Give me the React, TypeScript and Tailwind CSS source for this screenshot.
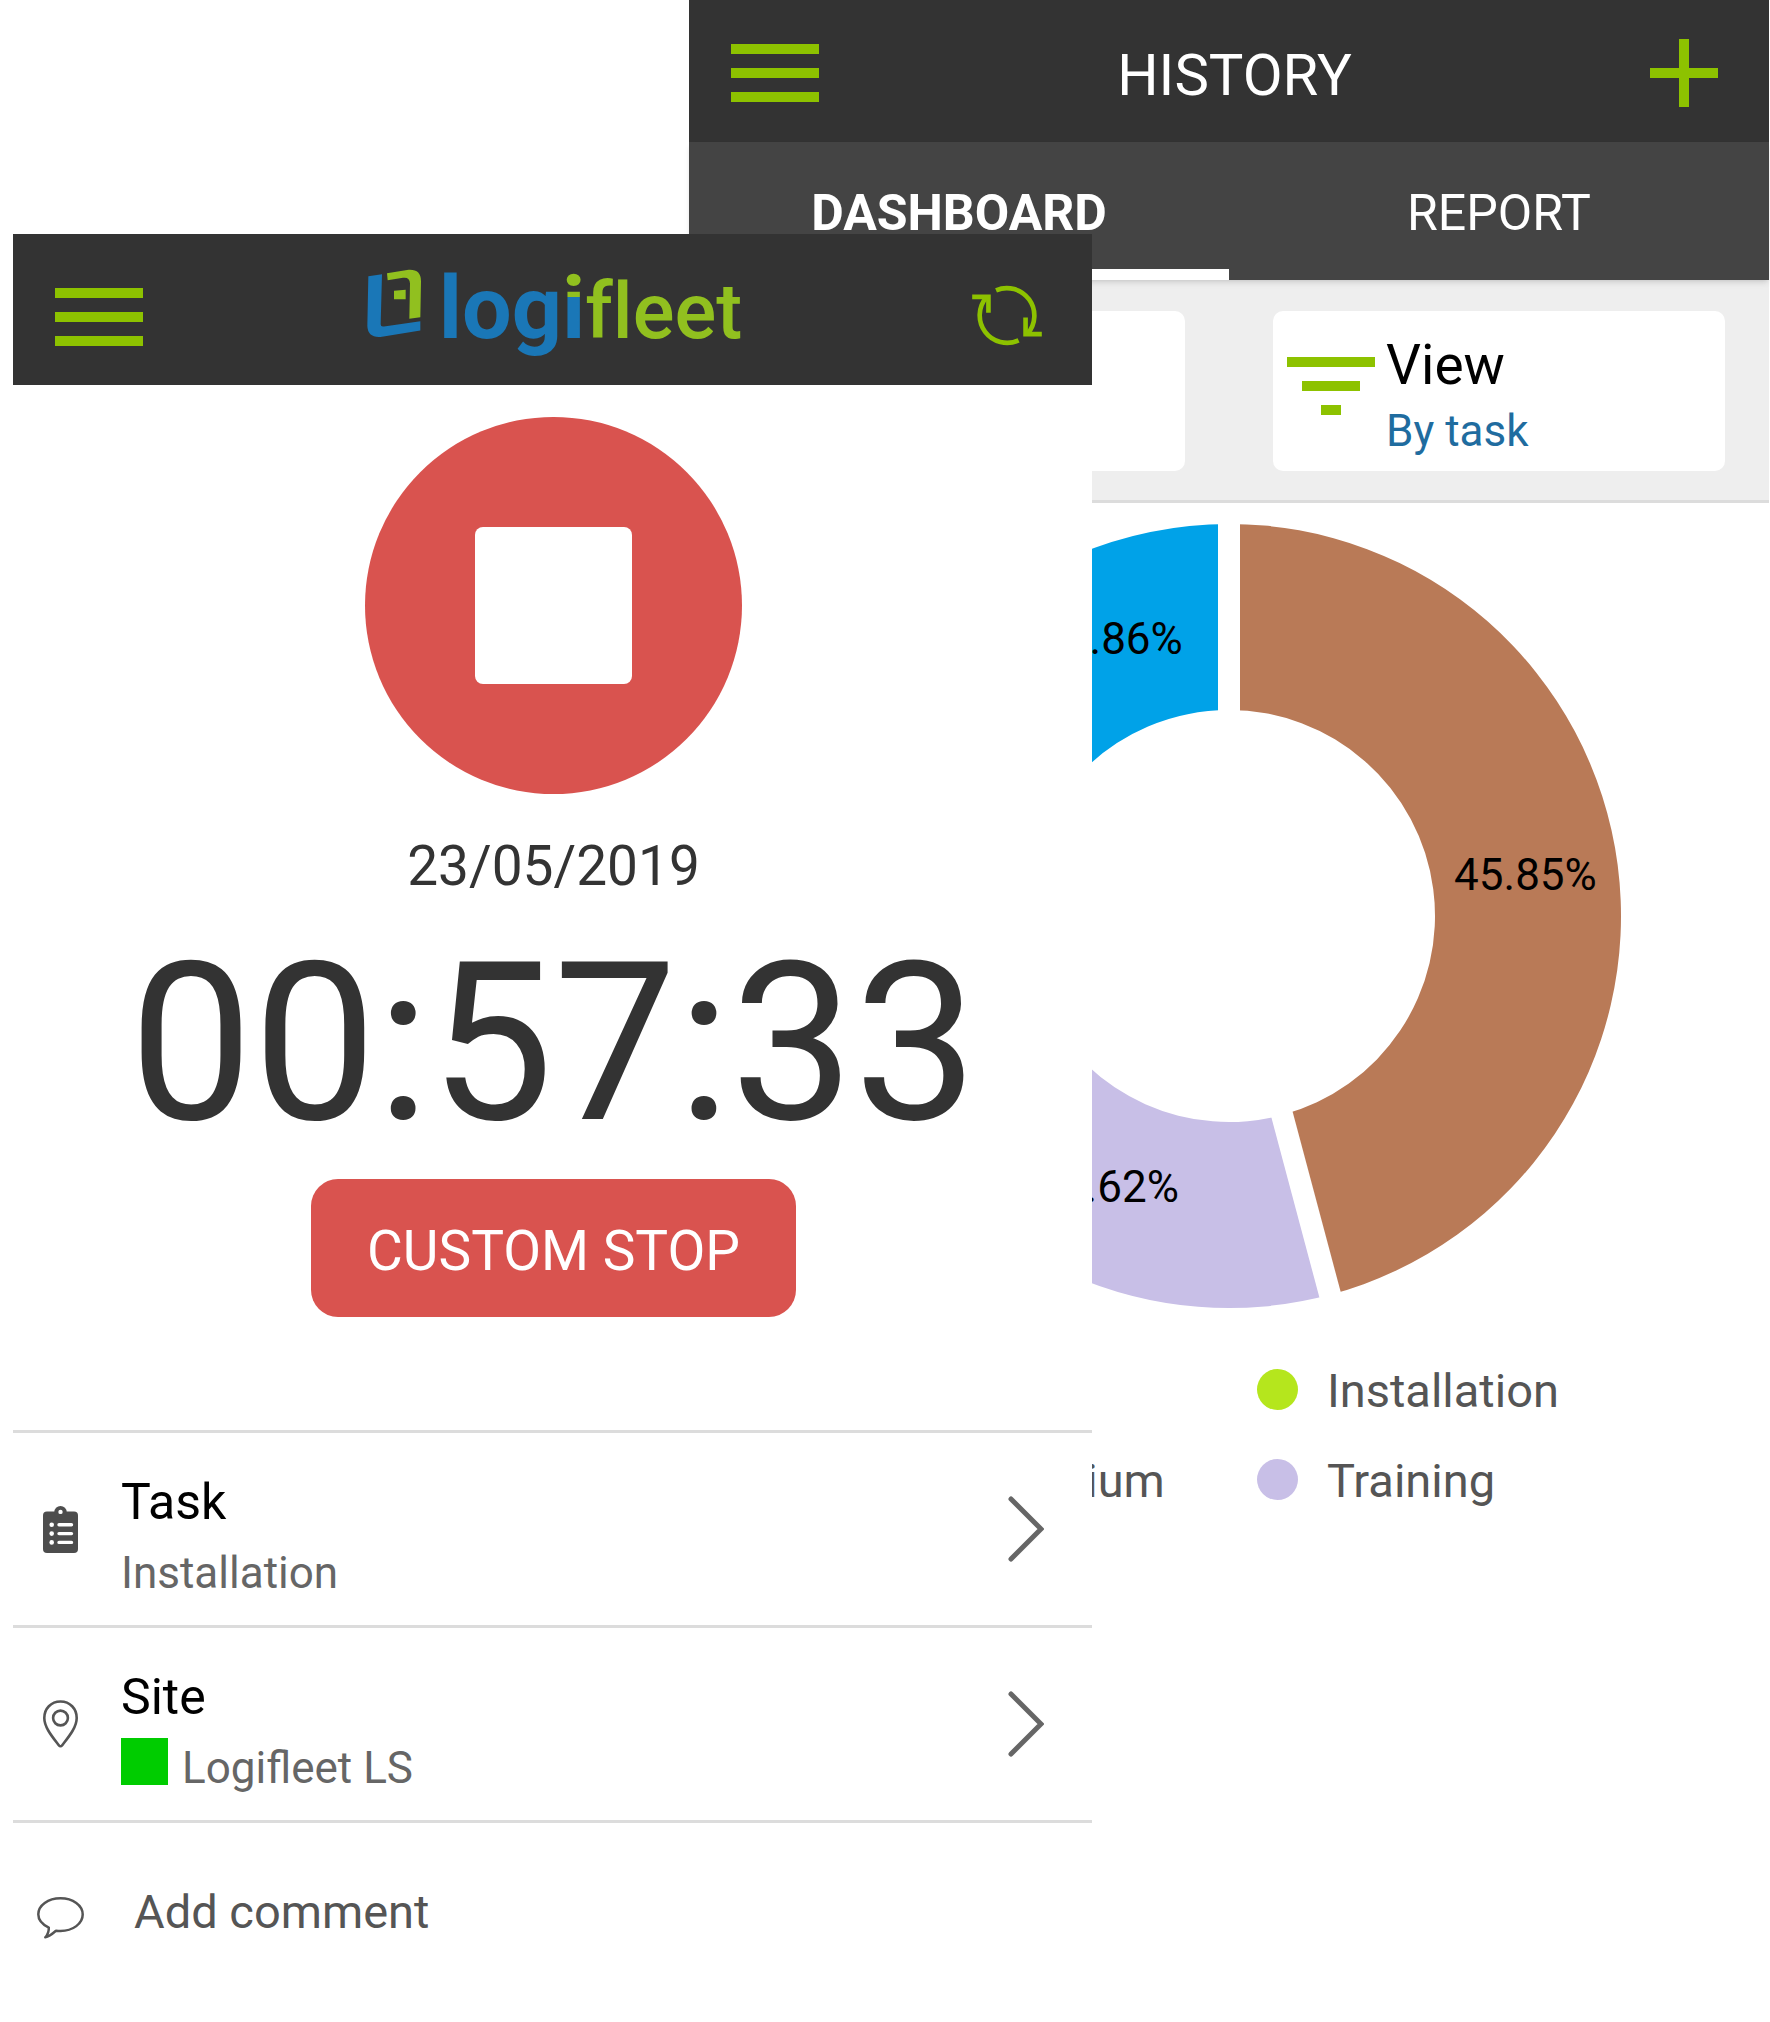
import React from "react";

const slices = [
  { name: "Visit", value: 45.85, color: "#b97a57" },
  { name: "Training", value: 21.62, color: "#c8bfe7" },
  { name: "Installation", value: 19.67, color: "#b5e61d" },
  { name: "Premium", value: 12.86, color: "#00a2e8" },
];

const legend = [
  { name: "Visit", color: "#b97a57" },
  { name: "Installation", color: "#b5e61d" },
  { name: "Premium", color: "#00a2e8" },
  { name: "Training", color: "#c8bfe7" },
];

const CX = 540;
const CY = 413;
const OUTER = 392;
const INNER = 206;

function point(turn: number, radius: number) {
  const angle = (turn / 100) * Math.PI * 2;
  return { x: CX + Math.sin(angle) * radius, y: CY - Math.cos(angle) * radius };
}

function Donut() {
  let total = 0;
  const parts = slices.map((slice) => {
    const start = total;
    total += slice.value;
    return { ...slice, start, end: total };
  });
  return (
    <svg viewBox="0 0 1080 826" className="block w-full" role="img" aria-label="Time by task">
      {parts.map((p) => {
        const a = point(p.start, OUTER);
        const b = point(p.end, OUTER);
        const c = point(p.end, INNER);
        const d = point(p.start, INNER);
        return (
          <path
            key={p.name}
            fill={p.color}
            d={`M${a.x} ${a.y}A${OUTER} ${OUTER} 0 0 1 ${b.x} ${b.y}L${c.x} ${c.y}A${INNER} ${INNER} 0 0 0 ${d.x} ${d.y}Z`}
          />
        );
      })}
      {parts.map((p) => {
        const a = point(p.start, INNER - 10);
        const b = point(p.start, OUTER + 10);
        return <line key={p.name} x1={a.x} y1={a.y} x2={b.x} y2={b.y} stroke="#fff" strokeWidth="22" />;
      })}
      {parts.map((p) => {
        const m = point((p.start + p.end) / 2, 299);
        return (
          <text key={p.name} x={m.x} y={m.y + 13} textAnchor="middle" className="fill-black text-[44px]">
            {p.value.toFixed(2)}%
          </text>
        );
      })}
    </svg>
  );
}

function MenuButton() {
  return (
    <button type="button" aria-label="Menu" className="flex w-[88px] flex-col gap-3.5">
      <span className="h-2.5 w-full bg-[#8dc200]" />
      <span className="h-2.5 w-full bg-[#8dc200]" />
      <span className="h-2.5 w-full bg-[#8dc200]" />
    </button>
  );
}

function Logo() {
  return (
    <div className="flex items-baseline gap-[18px] pl-3 leading-[100px] [font-variant-ligatures:none]">
      <svg viewBox="80 92 162 206" className="h-[69px] w-[54px]" aria-hidden="true">
        <path fill="#1a77b7" d="M84 113L125 107L121 257Q121 266 131 264L240 248V276L125 295Q82 300 81 262Z" />
        <path fill="#91c01f" d="M140 104L205 94Q242 92 242 128L240 236L207 241L209 135Q208 115 188 118L142 125Z" />
        <path fill="#91c01f" d="M161 157L196 154V182H161Z" />
      </svg>
      <span className="flex items-baseline whitespace-nowrap">
        <span className="text-[88px] font-bold text-[#1a77b7]">
          log
          <span className="bg-linear-to-b from-[#91c01f] from-40% to-[#1a77b7] to-40% bg-clip-text text-transparent">i</span>
        </span>
        <span className="text-[78px] font-medium text-[#91c01f]">fleet</span>
      </span>
    </div>
  );
}

function RefreshIcon() {
  return (
    <svg viewBox="96 135 210 184" className="h-[61px] w-[70px]" fill="none" stroke="#8dc200" strokeWidth="14" aria-hidden="true">
      <path d="M168 151A83 83 0 0 1 263 282" />
      <path d="M236 302A83 83 0 0 1 139 172" />
      <path d="M96 171H145V219" />
      <path d="M257 233V283H306" />
    </svg>
  );
}

function ClipboardIcon() {
  return (
    <svg viewBox="0 0 35 47" className="h-[47px] w-[35px]" aria-hidden="true">
      <rect y="5.4" width="35" height="41.6" rx="4" fill="#4d4d4d" />
      <circle cx="17.5" cy="6.2" r="6.2" fill="#4d4d4d" />
      <circle cx="17.5" cy="5.9" r="2.2" fill="#fff" />
      <g stroke="#fff" strokeWidth="3.4" strokeLinecap="round">
        <path d="M16 18.8H28.5M16 27.6H28.5M16 36.4H28.5" />
      </g>
      <g fill="#fff">
        <circle cx="8.7" cy="18.8" r="2.3" />
        <circle cx="8.7" cy="27.6" r="2.3" />
        <circle cx="8.7" cy="36.4" r="2.3" />
      </g>
    </svg>
  );
}

function PinIcon() {
  return (
    <svg viewBox="0 0 35 48" className="h-12 w-[35px]" fill="none" stroke="#555" strokeWidth="2.6" aria-hidden="true">
      <path d="M17.5 1.5C8 1.5 1.3 8.6 1.3 18C1.3 27.5 9.5 37 15.8 45.2Q17.5 47.4 19.2 45.2C25.5 37 33.7 27.5 33.7 18C33.7 8.6 27 1.5 17.5 1.5Z" />
      <circle cx="17.5" cy="18" r="7.4" />
    </svg>
  );
}

function BubbleIcon() {
  return (
    <svg viewBox="0 0 47 42" className="h-[42px] w-[47px]" fill="none" stroke="#555" strokeWidth="2.5" strokeLinejoin="round" aria-hidden="true">
      <path d="M23.5 1.3C11 1.3 1.3 8.3 1.3 17.3C1.3 22.8 5 27.4 11.8 30.6C12 34.5 10.8 37.5 8.3 40.3C12.5 39.5 15.8 36.5 19 33.7C20.5 33.9 22 34 23.5 34C36 34 45.7 26.5 45.7 17.5C45.7 8.5 36 1.3 23.5 1.3Z" />
    </svg>
  );
}

function ChevronIcon() {
  return (
    <svg viewBox="0 0 36 66" className="h-[66px] w-9" fill="none" stroke="#666" strokeWidth="5" strokeLinecap="round" aria-hidden="true">
      <path d="M3 3L33 33L3 63" />
    </svg>
  );
}

function Row({ icon, title, value, swatch }: { icon: React.ReactNode; title: string; value: string; swatch?: boolean }) {
  return (
    <button type="button" className="flex h-[195px] w-full items-center border-t-3 border-[#dcdcdc] pr-12 pl-6 text-left">
      <span className="flex w-[47px] justify-center">{icon}</span>
      <span className="ml-[37px] flex flex-1 flex-col gap-[11px] pt-4 leading-[60px]">
        <span className="text-[50px] text-black">{title}</span>
        <span className="flex gap-3.5 text-[44px] text-[#666]">
          {swatch && <span className="size-[47px] bg-[#00cc00]" />}
          {value}
        </span>
      </span>
      <ChevronIcon />
    </button>
  );
}

function HistoryScreen() {
  return (
    <section className="col-start-3 col-end-5 row-start-1 flex min-w-0 flex-col bg-white">
      <header className="grid h-[142px] grid-cols-[1fr_auto_1fr] items-center bg-[#333] pt-1 pr-[51px] pl-[42px]">
        <MenuButton />
        <h1 className="pt-1 pl-5 text-[58px] text-white">HISTORY</h1>
        <button type="button" aria-label="Add" className="justify-self-end">
          <svg viewBox="0 0 68 68" className="size-[68px]" stroke="#8dc200" strokeWidth="10" aria-hidden="true">
            <path d="M34 0V68M0 34H68" />
          </svg>
        </button>
      </header>
      <nav className="relative z-10 flex h-[138px] bg-[#444] text-[50px] text-white shadow-md">
        <button type="button" className="flex flex-1 flex-col font-bold">
          <span className="flex w-full flex-1 items-center justify-center pt-4">DASHBOARD</span>
          <span className="h-[11px] w-full bg-white" />
        </button>
        <button type="button" className="flex flex-1 flex-col">
          <span className="flex w-full flex-1 items-center justify-center pt-4">REPORT</span>
          <span className="h-[11px] w-full" />
        </button>
      </nav>
      <div className="grid grid-cols-2 gap-[88px] border-b-3 border-[#dcdcdc] bg-[#eee] px-11 pt-[31px] pb-[29px]">
        <div className="h-40 rounded-[10px] bg-white" />
        <button type="button" className="flex h-40 items-start gap-[11px] rounded-[10px] bg-white pl-3.5 text-left">
          <span className="flex w-[88px] flex-col items-center gap-3.5 pt-[46px]">
            <span className="h-2.5 w-full bg-[#8dc200]" />
            <span className="h-2.5 w-[58px] bg-[#8dc200]" />
            <span className="h-2.5 w-5 bg-[#8dc200]" />
          </span>
          <span className="flex flex-col gap-0.5 pt-[22px] leading-[64px]">
            <span className="text-[55px] text-black">View</span>
            <span className="text-[44px] text-[#1f6c9f]">By task</span>
          </span>
        </button>
      </div>
      <Donut />
      <ul className="mt-[15px] grid grid-cols-[352fr_512fr] pl-[216px] text-[47px] text-[#555]">
        {legend.map((item) => (
          <li key={item.name} className="flex h-[90px] items-center gap-[29px]">
            <svg viewBox="0 0 42 42" className="size-[41px]" aria-hidden="true">
              <circle cx="21" cy="21" r="21" fill={item.color} />
            </svg>
            <span className="pt-1">{item.name}</span>
          </li>
        ))}
      </ul>
    </section>
  );
}

function TimerScreen() {
  return (
    <section className="z-20 col-start-2 col-end-4 row-start-1 mt-[234px] flex min-w-0 flex-col bg-white">
      <header className="grid h-[151px] grid-cols-[1fr_auto_1fr] items-center bg-[#333] pr-[50px] pl-[42px]">
        <div className="pt-3.5">
          <MenuButton />
        </div>
        <Logo />
        <button type="button" aria-label="Refresh" className="justify-self-end pt-3">
          <RefreshIcon />
        </button>
      </header>
      <div className="flex flex-col items-center pt-8 pl-0.5 text-[#333]">
        <button type="button" aria-label="Stop" className="flex size-[377px] items-center justify-center rounded-full bg-[#d9534f]">
          <span className="size-[157px] rounded-lg bg-white" />
        </button>
        <p className="mt-10 text-[55px] leading-[64px]">23/05/2019</p>
        <p className="mt-9 text-[220px] leading-[220px]">00:57:33</p>
        <button type="button" className="mt-[25px] h-[138px] w-[485px] rounded-[27px] bg-[#d9534f] pt-1.5 text-[55px] text-white">
          CUSTOM STOP
        </button>
      </div>
      <div className="mt-[113px]">
        <Row icon={<ClipboardIcon />} title="Task" value="Installation" />
        <Row icon={<PinIcon />} title="Site" value="Logifleet LS" swatch />
        <label className="flex h-48 items-center border-t-3 border-[#dcdcdc] pr-12 pl-6">
          <span className="flex w-[47px] justify-center">
            <BubbleIcon />
          </span>
          <input
            type="text"
            aria-label="Add comment"
            placeholder="Add comment"
            className="ml-[50px] min-w-0 flex-1 pb-2.5 text-[47px] text-[#555] outline-none placeholder:text-[#555]"
          />
        </label>
      </div>
    </section>
  );
}

export default function App() {
  return (
    <main className="grid min-h-screen grid-cols-[minmax(0,13fr)_minmax(0,676fr)_minmax(0,403fr)_minmax(0,677fr)_minmax(0,1fr)] bg-white font-['Roboto',sans-serif]">
      <HistoryScreen />
      <TimerScreen />
    </main>
  );
}
